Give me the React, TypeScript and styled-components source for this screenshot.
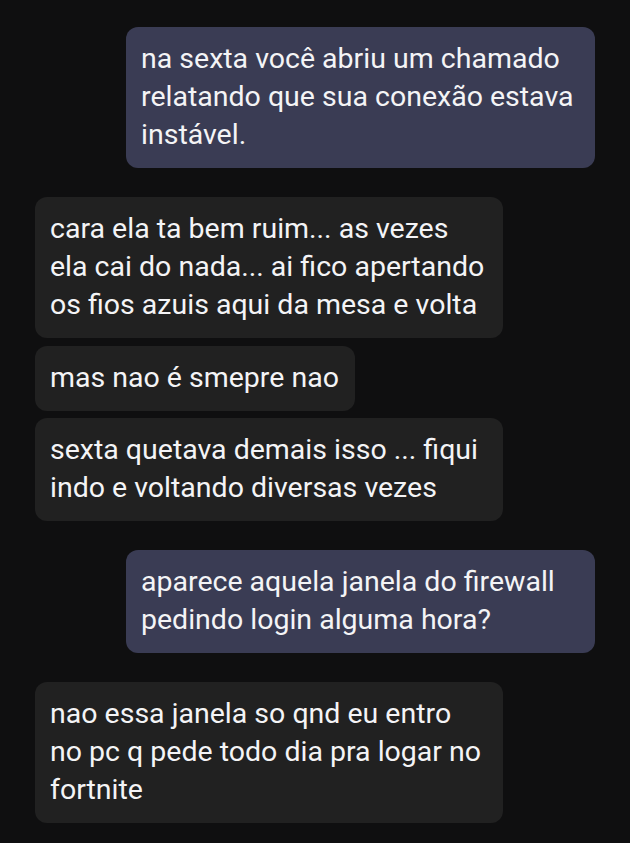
import React from 'react';
import styled, { createGlobalStyle, css } from 'styled-components';

const GlobalStyle = createGlobalStyle`
  html, body {
    margin: 0;
    padding: 0;
    background: #0f0f10;
  }
  body {
    font-family: Roboto, "Noto Sans", "Liberation Sans", sans-serif;
  }
`;

const Thread = styled.div`
  display: flex;
  flex-direction: column;
  padding: 27px 35px 23px 35px;
  min-height: 843px;
  box-sizing: border-box;
`;

const Group = styled.div<{ $mine?: boolean }>`
  display: flex;
  flex-direction: column;
  align-items: ${({ $mine }) => ($mine ? 'flex-end' : 'flex-start')};
  gap: 7.5px;
  & + & {
    margin-top: 29px;
  }
`;

const mine = css`
  background: #3a3c54;
  max-width: 469px;
`;

const theirs = css`
  background: #212121;
  max-width: 468px;
`;

const Bubble = styled.div<{ $mine?: boolean }>`
  box-sizing: border-box;
  padding: 13px 16px 14px 15px;
  border-radius: 12px;
  color: #f4f4f6;
  font-size: 28.5px;
  line-height: 38px;
  ${({ $mine }) => ($mine ? mine : theirs)};
`;

const messages: { mine: boolean; lines: string[] }[] = [
  { mine: true, lines: ['na sexta você abriu um chamado relatando que sua conexão estava instável.'] },
  {
    mine: false,
    lines: [
      'cara ela ta bem ruim... as vezes ela cai do nada... ai fico apertando os fios azuis aqui da mesa e volta',
      'mas nao é smepre nao',
      'sexta quetava demais isso ... fiqui indo e voltando diversas vezes',
    ],
  },
  { mine: true, lines: ['aparece aquela janela do firewall pedindo login alguma hora?'] },
  {
    mine: false,
    lines: ['nao essa janela so qnd eu entro no pc q pede todo dia pra logar no fortnite'],
  },
];

const App = () => (
  <>
    <GlobalStyle />
    <Thread>
      {messages.map((m, i) => (
        <Group key={i} $mine={m.mine}>
          {m.lines.map((t, j) => (
            <Bubble key={j} $mine={m.mine}>
              {t}
            </Bubble>
          ))}
        </Group>
      ))}
    </Thread>
  </>
);

export default App;
